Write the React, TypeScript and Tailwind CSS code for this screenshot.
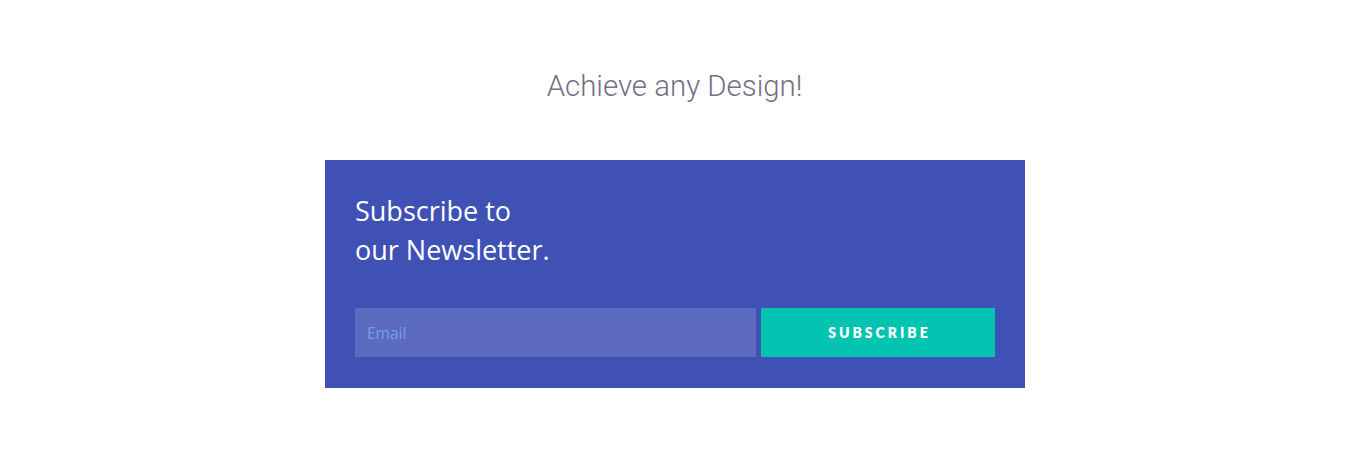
import React from "react";

const App: React.FC = () => {
  return (
    <div className="min-h-[468px] bg-white flex flex-col items-center pt-[66px]">
      <h2 className="ml-[1px] font-['Roboto',sans-serif] font-light text-[29.4px] leading-[40px] text-[#727182]">
        Achieve any Design!
      </h2>

      {/* Newsletter box */}
      <div className="ml-[2px] mt-[54px] w-[700px] bg-[#3f51b5] px-[30px] pt-[31px] pb-[31px]">
        <h3 className="font-['Open_Sans',sans-serif] text-[27px] leading-[39px] text-white">
          Subscribe to
          <br />
          our Newsletter.
        </h3>
        <form className="mt-[39px] flex gap-[5px]" onSubmit={(e) => e.preventDefault()}>
          <input
            type="email"
            placeholder="Email"
            className="h-[49px] flex-1 bg-[#5c6bc0] px-[12px] font-['Open_Sans',sans-serif] text-[15.5px] text-white placeholder:text-[#7aa0dc] outline-none"
          />
          <button
            type="submit"
            className="h-[49px] w-[234px] bg-[#03c4b0] pl-[3px] font-['Lato',sans-serif] font-extrabold text-[14px] tracking-[3px] text-white"
          >
            SUBSCRIBE
          </button>
        </form>
      </div>
    </div>
  );
};

export default App;
